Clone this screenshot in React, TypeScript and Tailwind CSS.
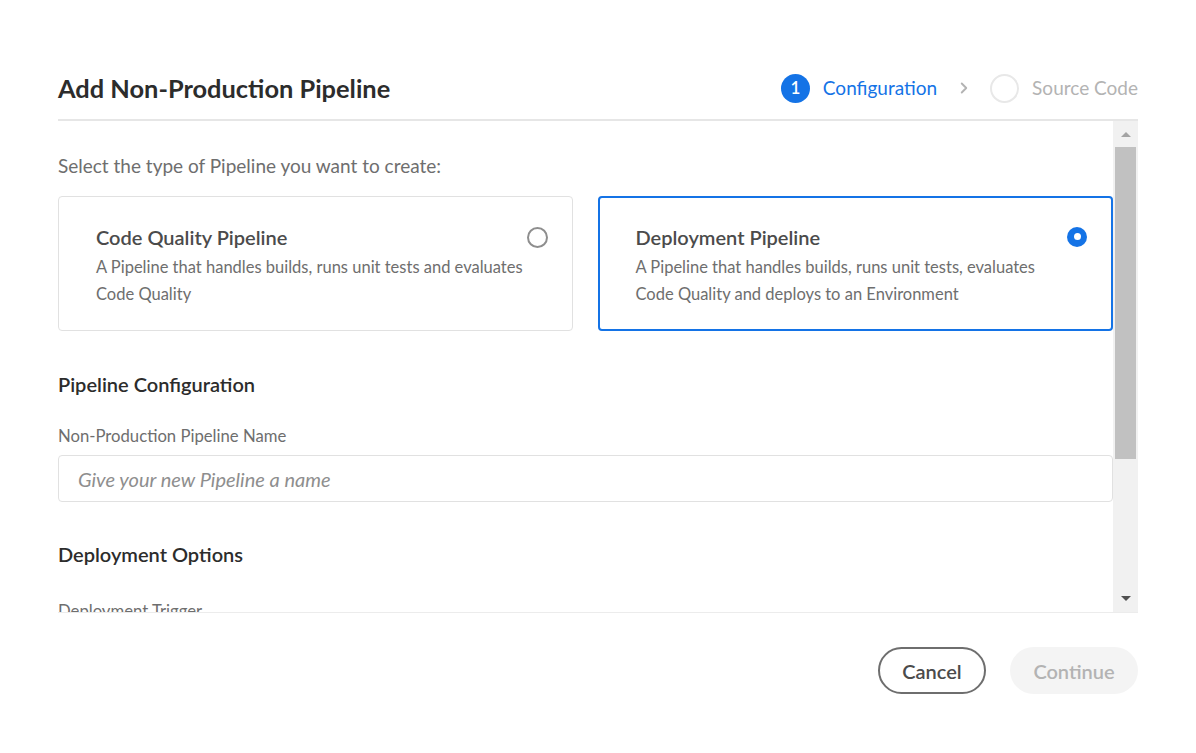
import { ChevronRight } from "lucide-react";

const font = { fontFamily: "Lato, 'Open Sans', sans-serif" };

function Radio({ checked }: { checked: boolean }) {
  if (checked) {
    return (
      <div className="w-[20px] h-[20px] rounded-full bg-[#1473e6] flex items-center justify-center shrink-0">
        <div className="w-[7px] h-[7px] rounded-full bg-white" />
      </div>
    );
  }
  return <div className="w-[21px] h-[21px] rounded-full border-2 border-[#8e8e8e] bg-white shrink-0" />;
}

function PipelineCard({
  title,
  text,
  selected,
}: {
  title: string;
  text: string;
  selected: boolean;
}) {
  return (
    <div
      className={
        selected
          ? "flex-1 h-[135px] rounded-[4px] border-2 border-[#1473e6] pl-[36px] pr-[24px] pt-[25.5px] flex"
          : "flex-1 h-[135px] rounded-[4px] border border-[#e1e1e1] pl-[37px] pr-[24px] pt-[26.5px] flex"
      }
    >
      <div className="flex-1">
        <div className="text-[20px] leading-[27px] font-semibold text-[#4b4b4b]">{title}</div>
        <div className="mt-[3px] text-[16.5px] leading-[27px] text-[#6e6e6e] max-w-[440px]">{text}</div>
      </div>
      <div className="pt-[3px]">
        <Radio checked={selected} />
      </div>
    </div>
  );
}

function Scrollbar() {
  return (
    <div className="w-[25px] bg-[#f1f1f1] flex flex-col items-center">
      <div className="h-[26px] flex items-center justify-center">
        <div className="w-0 h-0 border-l-[5px] border-r-[5px] border-b-[5px] border-l-transparent border-r-transparent border-b-[#a3a3a3]" />
      </div>
      <div className="w-[21px] h-[312px] bg-[#c1c1c1]" />
      <div className="flex-1" />
      <div className="h-[28px] flex items-center justify-center">
        <div className="w-0 h-0 border-l-[5px] border-r-[5px] border-t-[5px] border-l-transparent border-r-transparent border-t-[#505050]" />
      </div>
    </div>
  );
}

export default function App() {
  return (
    <div className="w-[1196px] h-[753px] bg-white px-[58px] pt-[58px] flex flex-col" style={font}>
      {/* Header */}
      <div className="h-[63px] border-b-2 border-[#e6e6e6] flex items-center justify-between pb-[1px]">
        <h1 className="text-[25.4px] font-bold text-[#2c2c2c]">Add Non-Production Pipeline</h1>
        <div className="flex items-center">
          <div className="w-[29px] h-[29px] rounded-full bg-[#1473e6] text-white text-[17px] font-semibold flex items-center justify-center">
            1
          </div>
          <span className="ml-[13px] text-[19px] text-[#1473e6]">Configuration</span>
          <ChevronRight className="ml-[18px] w-[18px] h-[18px] text-[#b3b3b3]" strokeWidth={2.5} />
          <div className="ml-[17px] w-[29px] h-[29px] rounded-full border-2 border-[#e8e8e8]" />
          <span className="ml-[13px] text-[19px] text-[#b3b3b3]">Source Code</span>
        </div>
      </div>

      {/* Scroll body */}
      <div className="h-[492px] flex border-b border-[#ececec]">
        <div className="flex-1 overflow-hidden">
          <div className="pt-[30.5px] text-[19px] leading-[27px] text-[#6e6e6e]">
            Select the type of Pipeline you want to create:
          </div>
          <div className="mt-[17.5px] flex gap-[25px]">
            <PipelineCard
              title="Code Quality Pipeline"
              text="A Pipeline that handles builds, runs unit tests and evaluates Code Quality"
              selected={false}
            />
            <PipelineCard
              title="Deployment Pipeline"
              text="A Pipeline that handles builds, runs unit tests, evaluates Code Quality and deploys to an Environment"
              selected={true}
            />
          </div>

          <h2 className="mt-[39.5px] text-[20px] leading-[27px] font-semibold text-[#2c2c2c]">Pipeline Configuration</h2>
          <label className="block mt-[25px] text-[16.7px] leading-[27px] text-[#6e6e6e]">
            Non-Production Pipeline Name
          </label>
          <div className="mt-[5.5px] h-[47px] rounded-[4px] border border-[#e1e1e1] px-[19px] flex items-center">
            <span className="text-[20px] italic text-[#8e8e8e]">Give your new Pipeline a name</span>
          </div>

          <h2 className="mt-[38.5px] text-[20px] leading-[27px] font-semibold text-[#2c2c2c]">Deployment Options</h2>
          <div className="mt-[30px] text-[16.7px] leading-[27px] text-[#6e6e6e]">Deployment Trigger</div>
        </div>
        <Scrollbar />
      </div>

      {/* Footer */}
      <div className="pt-[34px] flex justify-end gap-[24px]">
        <button className="w-[108px] h-[47px] rounded-full border-2 border-[#6e6e6e] text-[20px] font-semibold text-[#4b4b4b]">
          Cancel
        </button>
        <button className="w-[128px] h-[47px] rounded-full bg-[#f4f4f4] text-[20px] font-semibold text-[#b3b3b3]">
          Continue
        </button>
      </div>
    </div>
  );
}
